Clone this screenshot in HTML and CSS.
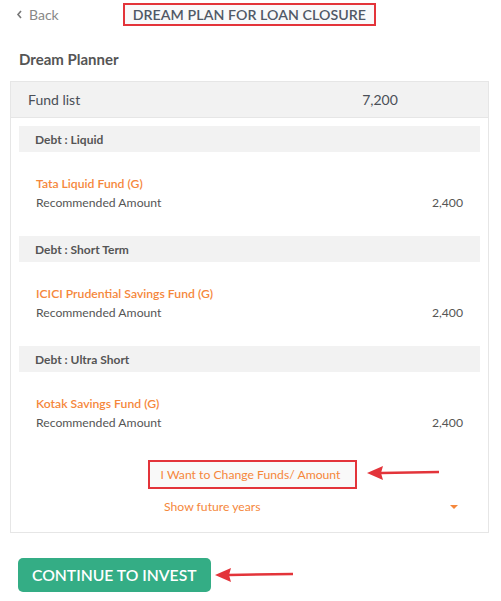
FILE: index.html
```html
<!DOCTYPE html>
<html>
<head>
<meta charset="utf-8">
<link rel="stylesheet" href="styles.css">
</head>
<body>
<div class="page">
  <header class="topbar">
    <a class="back"><svg class="chev" width="7" height="9" viewBox="0 0 7 9"><path d="M5 1 L2 4.5 L5 8" fill="none" stroke="#777" stroke-width="1.6"/></svg>Back</a>
    <h1 class="title">DREAM PLAN FOR LOAN CLOSURE</h1>
  </header>
  <h2 class="heading">Dream Planner</h2>
  <section class="card">
    <div class="card-head"><span>Fund list</span><span class="total">7,200</span></div>
    <div class="card-body">
      <div class="cat">Debt : Liquid</div>
      <div class="fund">
        <div class="fund-name">Tata Liquid Fund (G)</div>
        <div class="fund-row"><span>Recommended Amount</span><span>2,400</span></div>
      </div>
      <div class="cat">Debt : Short Term</div>
      <div class="fund">
        <div class="fund-name">ICICI Prudential Savings Fund (G)</div>
        <div class="fund-row"><span>Recommended Amount</span><span>2,400</span></div>
      </div>
      <div class="cat">Debt : Ultra Short</div>
      <div class="fund">
        <div class="fund-name">Kotak Savings Fund (G)</div>
        <div class="fund-row"><span>Recommended Amount</span><span>2,400</span></div>
      </div>
      <div class="change-wrap">
        <a class="change">I Want to Change Funds/ Amount</a>
        <svg class="arrow arrow-change" width="74" height="16" viewBox="0 0 74 16"><path d="M14 8 L72 7" stroke="#e3343a" stroke-width="2.5"/><path d="M0 8 L16 1 L14 8 L16 15 Z" fill="#e3343a"/></svg>
      </div>
      <div class="future"><span>Show future years</span><span class="caret"></span></div>
    </div>
  </section>
  <div class="actions">
    <button class="invest">CONTINUE TO INVEST</button>
    <svg class="arrow arrow-invest" width="80" height="16" viewBox="0 0 80 16"><path d="M14 8 L78 7" stroke="#e3343a" stroke-width="2.5"/><path d="M0 8 L16 1 L14 8 L16 15 Z" fill="#e3343a"/></svg>
  </div>
</div>
</body>
</html>
```
FILE: styles.css
```css
* { box-sizing: border-box; }
body {
  margin: 0;
  font-family: Lato, "Open Sans", "Liberation Sans", sans-serif;
  color: #555;
  background: #fff;
}
.page { width: 501px; padding: 0 12px 0 10px; }
.topbar {
  display: flex;
  align-items: center;
  height: 29px;
  padding-bottom: 1px;
}
.back {
  display: flex;
  align-items: center;
  gap: 6px;
  margin-left: 6px;
  font-size: 14px;
  color: #888;
}
.chev { margin-top: 1px; }
.title {
  margin: 0 0 0 64px;
  font-size: 14.2px;
  font-weight: 600;
  color: #505866;
  border: 2px solid #e3343a;
  background: #f9f9fa;
  padding: 1px 8px 1px 8px;
  line-height: 17px;
  letter-spacing: 0.05px;
}
.heading {
  margin: 21px 0 0 9px;
  font-size: 15px;
  font-weight: 700;
  color: #555;
  line-height: 19px;
}
.card {
  margin-top: 12px;
  border: 1px solid #e6e6e6;
}
.card-head {
  display: flex;
  align-items: center;
  height: 36px;
  padding-left: 17px;
  background: #f2f2f2;
  border-bottom: 1px solid #e6e6e6;
  font-size: 14px;
  color: #4a4f57;
}
.total { margin-left: 282px; }
.card-body { padding: 8px 8px 0 8px; }
.cat {
  height: 26px;
  display: flex;
  align-items: center;
  padding-left: 16px;
  background: #f2f2f2;
  font-size: 12px;
  font-weight: 700;
  color: #555;
}
.fund {
  padding: 23px 17px 24px 17px;
  font-size: 12.2px;
  line-height: 18px;
}
.fund-name {
  color: #f5873b;
  font-weight: 600;
}
.fund-row {
  display: flex;
  justify-content: space-between;
  margin-top: 1px;
  color: #555;
}
.change-wrap {
  position: relative;
  display: flex;
  justify-content: center;
  padding-left: 6px;
  margin-top: 4px;
}
.change {
  display: block;
  border: 2px solid #e3343a;
  background: #f9f9f9;
  font-size: 12.2px;
  color: #f5873b;
  padding: 4px 15px 4px 11px;
  line-height: 17px;
}
.arrow-change {
  position: absolute;
  left: 348px;
  top: 5px;
}
.future {
  display: flex;
  justify-content: space-between;
  align-items: center;
  padding: 10px 22px 17px 145px;
  font-size: 12.2px;
  line-height: 16px;
  color: #f5873b;
}
.caret {
  width: 0;
  height: 0;
  border-left: 4px solid transparent;
  border-right: 4px solid transparent;
  border-top: 4px solid #f5873b;
}
.actions {
  position: relative;
  margin-top: 25px;
  display: flex;
}
.invest {
  margin-left: 8px;
  height: 34px;
  padding: 0 14px;
  border: none;
  border-radius: 5px;
  background: #34ad85;
  color: #fff;
  font-family: Lato, "Open Sans", "Liberation Sans", sans-serif;
  font-size: 15.7px;
  font-weight: 600;
}
.arrow-invest {
  position: absolute;
  left: 205px;
  top: 9px;
}
```
